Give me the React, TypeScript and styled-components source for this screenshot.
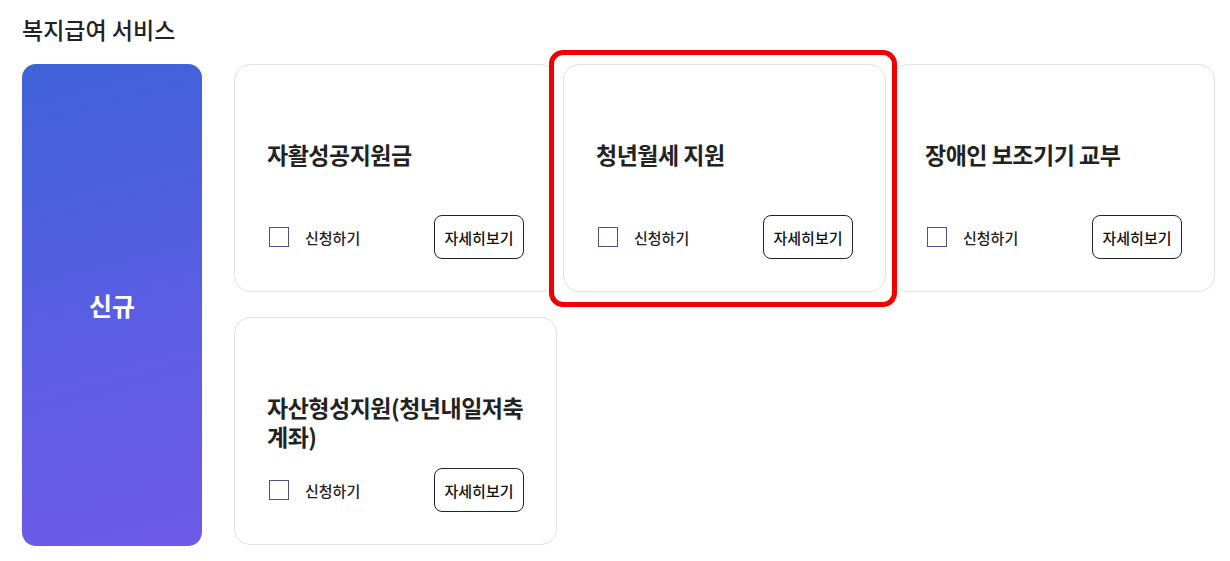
import styled, { createGlobalStyle } from "styled-components";

const GlobalStyle = createGlobalStyle`
  html, body {
    margin: 0;
    padding: 0;
    background: #fff;
  }
  body {
    font-family: "Noto Sans CJK KR", "Noto Sans", sans-serif;
    color: #222;
  }
`;

type Service = {
  title: string;
  highlighted?: boolean;
};

const services: Service[] = [
  { title: "자활성공지원금" },
  { title: "청년월세 지원", highlighted: true },
  { title: "장애인 보조기기 교부" },
  { title: "자산형성지원(청년내일저축계좌)" },
];

export default function App() {
  return (
    <>
      <GlobalStyle />
      <Page>
        <Heading>복지급여 서비스</Heading>
        <Body>
          <CategoryPanel>신규</CategoryPanel>
          <CardGrid>
            {services.map((s) =>
              s.highlighted ? (
                <Highlight key={s.title}>
                  <ServiceCard title={s.title} />
                </Highlight>
              ) : (
                <ServiceCard key={s.title} title={s.title} />
              )
            )}
          </CardGrid>
        </Body>
      </Page>
    </>
  );
}

const ServiceCard = ({ title }: { title: string }) => (
  <Card>
    <CardTitle>{title}</CardTitle>
    <CardFooter>
      <Apply>
        <CheckBox type="checkbox" />
        <ApplyLabel>신청하기</ApplyLabel>
      </Apply>
      <DetailButton type="button">자세히보기</DetailButton>
    </CardFooter>
  </Card>
);

const Page = styled.div`
  padding: 14px 22px;
`;

const Heading = styled.h2`
  margin: 0 0 20px;
  font-size: 23px;
  line-height: 30px;
  font-weight: 500;
  color: #222;
`;

const Body = styled.div`
  display: flex;
  gap: 32px;
  align-items: stretch;
`;

const CategoryPanel = styled.div`
  width: 180px;
  height: 482px;
  flex-shrink: 0;
  border-radius: 14px;
  background: linear-gradient(165deg, #3f62d7 0%, #5b5ee3 55%, #6f5ae9 100%);
  color: #fff;
  font-size: 25px;
  font-weight: 700;
  display: flex;
  align-items: center;
  justify-content: center;
`;

const CardGrid = styled.div`
  display: grid;
  grid-template-columns: repeat(3, 323px);
  grid-auto-rows: 228px;
  column-gap: 6px;
  row-gap: 25px;
  align-content: start;
`;

const Highlight = styled.div`
  position: relative;
  z-index: 1;
  display: flex;

  &::before {
    content: "";
    position: absolute;
    top: -14px;
    left: -14px;
    right: -11px;
    bottom: -15px;
    border: 5px solid #f20000;
    border-radius: 14px;
    background: #fff;
    z-index: -1;
  }
`;

const Card = styled.div`
  flex: 1;
  box-sizing: border-box;
  display: flex;
  flex-direction: column;
  padding: 75px 32px 32px;
  border: 1px solid #e2e2e2;
  border-radius: 16px;
  background: #fff;
`;

const CardTitle = styled.h3`
  margin: 0;
  font-size: 23px;
  line-height: 29px;
  font-weight: 700;
  letter-spacing: -0.5px;
  color: #222;
`;

const CardFooter = styled.div`
  margin-top: auto;
  display: flex;
  align-items: center;
  justify-content: space-between;
`;

const Apply = styled.label`
  display: flex;
  align-items: center;
  gap: 16px;
  padding-left: 2px;
`;

const CheckBox = styled.input`
  appearance: none;
  margin: 0;
  width: 20px;
  height: 20px;
  box-sizing: border-box;
  border: 1.5px solid #4a5480;
  background: #fff;
`;

const ApplyLabel = styled.span`
  font-size: 15px;
  font-weight: 500;
  color: #222;
`;

const DetailButton = styled.button`
  width: 90px;
  height: 44px;
  border: 1px solid #222;
  border-radius: 8px;
  background: #fff;
  font-family: inherit;
  font-size: 15px;
  font-weight: 500;
  color: #111;
  padding: 0;
`;
